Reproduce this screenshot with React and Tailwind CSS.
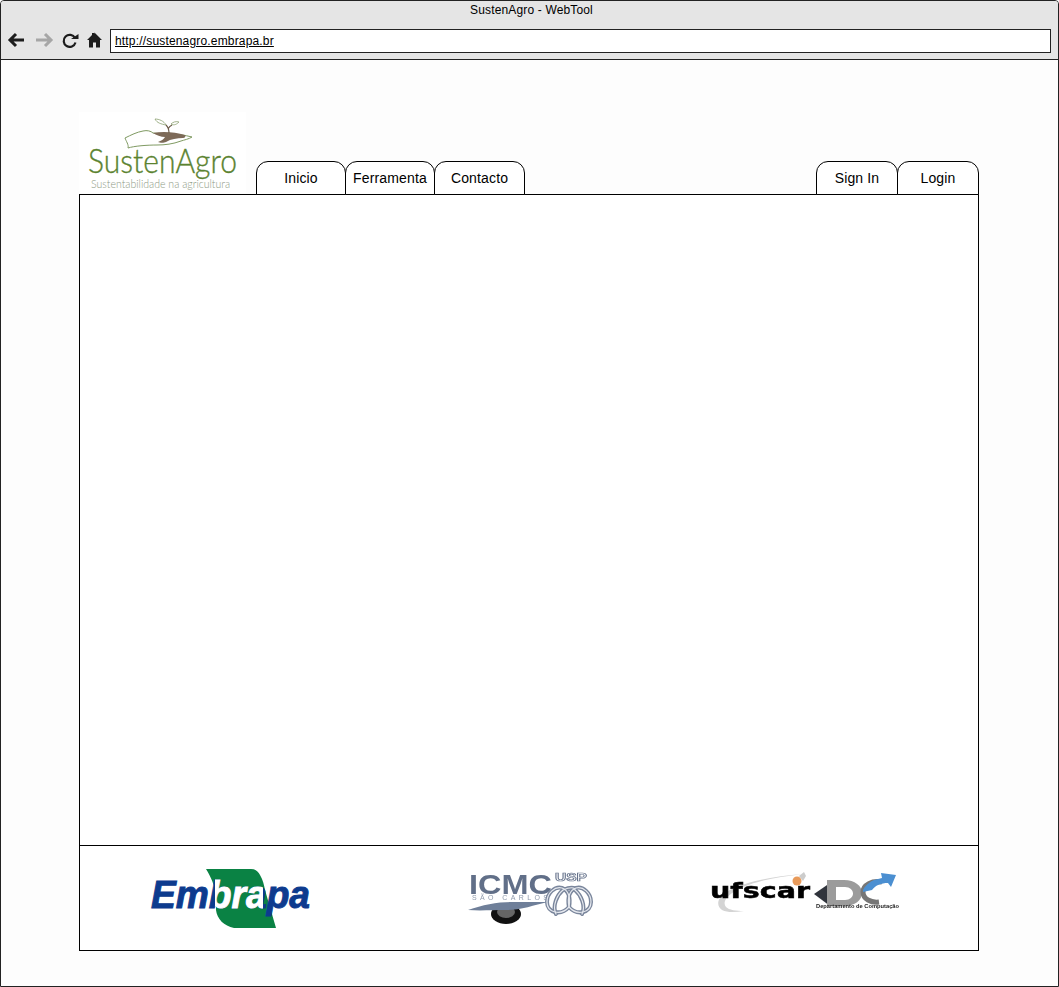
import React from 'react';

const Tab = ({ label, className = '' }) => (
  <div className={`h-[34px] flex items-center justify-center border border-black rounded-t-[12px] bg-white text-[14px] tracking-[0.15px] text-black pt-px ${className}`}>
    {label}
  </div>
);

const ToolbarIcons = () => (
  <svg width="110" height="24" viewBox="0 0 110 24" className="block shrink-0">
    <path d="M24 12H12M16 6l-6 6 6 6" fill="none" stroke="#1c1c1c" strokeWidth="3" />
    <path d="M36 12h13M45 6l6 6-6 6" fill="none" stroke="#a6a6a6" strokeWidth="3" />
    <path d="M75 10A6 6 0 1 0 75.5 14.5" fill="none" stroke="#1c1c1c" strokeWidth="2.2" />
    <path d="M71 11h7.5V6z" fill="#1c1c1c" />
    <path d="M94.5 4.5L102 12h-2v7.5h-4v-5h-3v5h-4V12h-2l5-5V5h2v1z" fill="#1c1c1c" />
  </svg>
);

const SustenAgroLogo = () => (
  <svg width="167" height="81" viewBox="0 0 167 81" className="block bg-white">
    {/* hand */}
    <path d="M46 26c6-3 12-6 18-7 4-1 8 0 10 2 10 1 24 0 39 4-3 2-8 3-11 4-8 3-16 4-24 4-10 0-23 1-29 3 1-3-2-7-3-10z" fill="none" stroke="#7f9a62" strokeWidth="1" />
    <path d="M74 21c10-2 22-1 32 2 1 1 0 3-2 3-6 0-12 1-17 4-2 1-6 1-8 0 3-1 6-3 7-5-4 0-9-2-12-4z" fill="#7d6a58" />
    {/* sprout */}
    <path d="M90 21c0-4-1-6-3-8M89 17c1-2 2-3 4-4" fill="none" stroke="#6b5a48" strokeWidth="1.2" />
    <path d="M87 13c-5-1-9-2-11-6 4 0 9 2 11 6zM92 12c2-2 5-3 8-2-2 2-5 4-8 2z" fill="none" stroke="#8aa06e" strokeWidth="0.8" />
    <text x="9" y="61" textLength="149" lengthAdjust="spacingAndGlyphs" fontFamily="Lato, sans-serif" fontWeight="300" fontSize="33" fill="#5b8330" stroke="#5b8330" strokeWidth="0.35">SustenAgro</text>
    <text x="12" y="76" textLength="139" lengthAdjust="spacingAndGlyphs" fontFamily="Lato, sans-serif" fontWeight="300" fontSize="11.5" fill="#8d9a84">Sustentabilidade na agricultura</text>
  </svg>
);

const EmbrapaLogo = () => (
  <svg width="162" height="62" viewBox="0 0 162 62" className="block">
    <defs>
      <clipPath id="leaf-white">
        <rect x="65" y="0" width="48" height="62" />
      </clipPath>
    </defs>
    <path d="M56 1h45c4 0 7 2 9 6 3 5 4 10 5 15l11 38H84c-10-2-17-9-18-18V28C65 18 61 9 56 1z" fill="#0a8244" />
    <g fontFamily="'Liberation Sans', sans-serif" fontWeight="700" fontStyle="italic" fontSize="39" strokeWidth="1">
      <text x="1" y="40" textLength="159" lengthAdjust="spacingAndGlyphs" fill="#0d3b8e" stroke="#0d3b8e">Embrapa</text>
      <g clipPath="url(#leaf-white)">
        <text x="1" y="40" textLength="159" lengthAdjust="spacingAndGlyphs" fill="#ffffff" stroke="#ffffff">Embrapa</text>
      </g>
    </g>
  </svg>
);

const IcmcLogo = () => (
  <svg width="130" height="56" viewBox="0 0 130 56" className="block blur-[0.5px]">
    <text x="4" y="23" textLength="83" lengthAdjust="spacingAndGlyphs" fontFamily="'Liberation Sans', sans-serif" fontWeight="700" fontSize="28" fill="#616f88">ICMC</text>
    <ellipse cx="41" cy="43" rx="15" ry="10" fill="#111" />
    <ellipse cx="41" cy="41" rx="9" ry="6" fill="#666" />
    <path d="M3 39c15-5 28-8 45-8 12 0 24 0 35 0-14 3-26 8-42 8-14 0-26 1-38 0z" fill="#6f7f99" />
    <text x="7" y="29" textLength="76" fontFamily="'Liberation Sans', sans-serif" fontSize="7" fill="#8f9aac">SÃO CARLOS</text>
    <text x="90" y="10" textLength="32" lengthAdjust="spacingAndGlyphs" fontFamily="'Liberation Sans', sans-serif" fontWeight="700" fontSize="10" fill="#ffffff" stroke="#64718a" strokeWidth="0.7">USP</text>
    <g fill="none" strokeLinecap="round" transform="translate(-2 0)">
      <g stroke="#7a869c" strokeWidth="4">
        <path d="M106 36C98 45 84 42 84 31c0-9 8-16 15-14 6 2 9 9 7 19z" />
        <path d="M106 36c8 9 22 6 22-5 0-9-8-16-15-14-6 2-9 9-7 19z" />
        <path d="M93 43c-4-8 1-19 7-24 7-3 12-3 12 0 6 5 11 16 7 24" />
      </g>
      <g stroke="#e6e9ef" strokeWidth="1.2">
        <path d="M106 36C98 45 84 42 84 31c0-9 8-16 15-14 6 2 9 9 7 19z" />
        <path d="M106 36c8 9 22 6 22-5 0-9-8-16-15-14-6 2-9 9-7 19z" />
        <path d="M93 43c-4-8 1-19 7-24 7-3 12-3 12 0 6 5 11 16 7 24" />
      </g>
    </g>
  </svg>
);

const UfscarLogo = () => (
  <svg width="192" height="46" viewBox="0 0 192 46" className="block blur-[0.4px]">
    <path d="M95 4C65 6 35 12 18 22 9 28 8 36 14 40c6 3 14 2 22 1-8 0-15-1-18-4-4-5 1-11 9-16C44 11 70 7 95 4z" fill="#d4d4d4" />
    <text x="2" y="28" textLength="100" lengthAdjust="spacingAndGlyphs" fontFamily="'DejaVu Sans', sans-serif" fontWeight="700" fontSize="21" fill="#000000" stroke="#000000" strokeWidth="0.5">ufscar</text>
    <path d="M91 6l5-4 2 4-3 5z" fill="#cccccc" />
    <circle cx="89" cy="11" r="4.5" fill="#e89a5a" />
    <path d="M106 24L122 13v23z" fill="#30343c" />
    <path fillRule="evenodd" d="M119 10h17c11 0 18 6 18 13s-7 13-18 13h-17zM128 17v13h9c5 0 8-3 8-6.500s-3-6.500-8-6.500z" fill="#9b9b9b" />
    <path d="M174 12c-10-2-19 3-19 10 0 7 8 11 16 10" fill="none" stroke="#767676" strokeWidth="5" />
    <path d="M155 20c3-6 9-10 15-11l4-1-1-5 15 2-5 12-3-4c-7 0-12 2-16 7l-9 2z" fill="#4b8fd1" />
    <text x="108" y="38" textLength="83" lengthAdjust="spacingAndGlyphs" fontFamily="'Liberation Sans', sans-serif" fontWeight="700" fontSize="5.5" fill="#222222">Departamento de Computação</text>
  </svg>
);

export default function App() {
  return (
    <div className="w-[1059px] h-[987px] flex flex-col overflow-hidden border border-[#222] rounded-t-[4px] bg-[#fdfdfd] font-['Liberation_Sans',Arial,sans-serif]">
      {/* Browser chrome */}
      <div className="h-[59px] shrink-0 flex flex-col bg-[#e5e5e5] border-b border-[#222]">
        <div className="h-[18px] pl-[4px] flex items-center justify-center text-[12px] tracking-[0.15px] text-black">SustenAgro - WebTool</div>
        <div className="flex items-start mt-[10px] pr-[7px]">
          <div className="-ml-[1px] -mt-[1px]"><ToolbarIcons /></div>
          <div className="flex-1 h-[24px] flex items-center px-[4px] border border-[#222] bg-white text-[12px] tracking-[0.17px] underline text-black">
            http://sustenagro.embrapa.br
          </div>
        </div>
      </div>

      {/* Page */}
      <div className="flex flex-col w-[900px] ml-[78px] mt-[52px]">
        <div className="flex items-end relative z-10 -mb-px">
          <div className="mr-[10px] mb-[2px]"><SustenAgroLogo /></div>
          <Tab label="Inicio" className="w-[90px]" />
          <Tab label="Ferramenta" className="w-[90px] -ml-px" />
          <Tab label="Contacto" className="w-[91px] -ml-px" />
          <div className="flex-1" />
          <Tab label="Sign In" className="w-[82px]" />
          <Tab label="Login" className="w-[82px] -ml-px" />
        </div>
        <div className="h-[652px] border border-black bg-white" />
        <div className="h-[106px] -mt-px flex items-center border border-black bg-white relative">
          <div className="absolute left-[70px] top-[22px]"><EmbrapaLogo /></div>
          <div className="absolute left-[385px] top-[25px]"><IcmcLogo /></div>
          <div className="absolute left-[628px] top-[24px]"><UfscarLogo /></div>
        </div>
      </div>
    </div>
  );
}
